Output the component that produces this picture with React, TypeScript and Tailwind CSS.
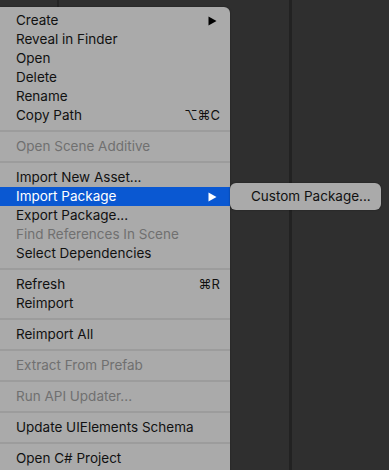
import React from "react";

type Item =
  | { type: "sep" }
  | { type: "item"; label: string; disabled?: boolean; shortcut?: string; sub?: boolean; active?: boolean };

const items: Item[] = [
  { type: "item", label: "Create", sub: true },
  { type: "item", label: "Reveal in Finder" },
  { type: "item", label: "Open" },
  { type: "item", label: "Delete" },
  { type: "item", label: "Rename" },
  { type: "item", label: "Copy Path", shortcut: "⌥⌘C" },
  { type: "sep" },
  { type: "item", label: "Open Scene Additive", disabled: true },
  { type: "sep" },
  { type: "item", label: "Import New Asset..." },
  { type: "item", label: "Import Package", sub: true, active: true },
  { type: "item", label: "Export Package..." },
  { type: "item", label: "Find References In Scene", disabled: true },
  { type: "item", label: "Select Dependencies" },
  { type: "sep" },
  { type: "item", label: "Refresh", shortcut: "⌘R" },
  { type: "item", label: "Reimport" },
  { type: "sep" },
  { type: "item", label: "Reimport All" },
  { type: "sep" },
  { type: "item", label: "Extract From Prefab", disabled: true },
  { type: "sep" },
  { type: "item", label: "Run API Updater...", disabled: true },
  { type: "sep" },
  { type: "item", label: "Update UIElements Schema" },
  { type: "sep" },
  { type: "item", label: "Open C# Project" },
];

function Arrow({ white }: { white?: boolean }) {
  return (
    <svg width="9" height="10" viewBox="0 0 9 10" className="block">
      <path d="M0.5 0.5 L8.5 5 L0.5 9.5 Z" fill={white ? "#ffffff" : "#000000"} />
    </svg>
  );
}

export default function App() {
  return (
    <div
      className="relative w-[389px] h-[470px] overflow-hidden bg-[#2f2f2f]"
      style={{ fontFamily: "Inter, 'Noto Sans', sans-serif" }}
    >
      <div className="flex h-full">
        <div className="w-[57px] h-full" />
        <div className="w-[2px] h-full bg-[#242424]" />
        <div className="w-[230px] h-full" />
        <div className="w-[3px] h-full bg-[#222222]" />
        <div className="flex-1 h-full" />
      </div>

      <div className="absolute left-0 top-[7px] w-[230px] bg-[#aaaaaa] rounded-tr-[6px] pt-[4px] pb-[6px] shadow-[0_0_2px_rgba(0,0,0,0.4)]">
        {items.map((it, i) =>
          it.type === "sep" ? (
            <div key={i} className="h-[12px] flex items-center">
              <div className="w-full h-[2px] bg-[#9c9c9c]" />
            </div>
          ) : (
            <div
              key={i}
              className={
                "h-[19px] flex items-center pl-[16px] pr-[12px] text-[13.5px] leading-none " +
                (it.active ? "bg-[#0a58d2] text-white" : it.disabled ? "text-[#707070]" : "text-[#111111]")
              }
            >
              <span className="flex-1">{it.label}</span>
              {it.shortcut && <span className="mr-[-2px] text-[13px]">{it.shortcut}</span>}
              {it.sub && (
                <span className="mr-[1px]">
                  <Arrow white={it.active} />
                </span>
              )}
            </div>
          )
        )}
      </div>

      <div className="absolute left-[230px] top-[183px] w-[151px] bg-[#aaaaaa] rounded-[6px] py-[4px] shadow-[0_0_2px_rgba(0,0,0,0.4)]">
        <div className="h-[19px] flex items-center pl-[21px] text-[13.5px] leading-none text-[#111111]">
          Custom Package...
        </div>
      </div>
    </div>
  );
}
